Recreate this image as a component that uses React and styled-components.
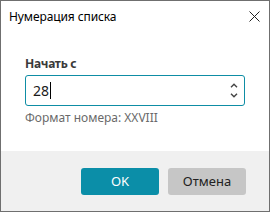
import React from "react";
import styled, { createGlobalStyle } from "styled-components";

const Global = createGlobalStyle`
  html, body {
    margin: 0;
    padding: 0;
    background: #ffffff;
  }
  * {
    box-sizing: border-box;
  }
`;

const Window = styled.div`
  width: 270px;
  height: 212px;
  border: 1px solid #6f6f6f;
  background: #ffffff;
  display: flex;
  flex-direction: column;
  font-family: "Segoe UI", "Noto Sans", sans-serif;
  color: #1a1a1a;
`;

const TitleBar = styled.div`
  height: 31px;
  display: flex;
  align-items: center;
  justify-content: space-between;
  padding: 0 4px 0 8px;
`;

const Title = styled.span`
  font-size: 12px;
  color: #000;
  letter-spacing: -0.1px;
`;

const CloseButton = styled.button`
  width: 22px;
  height: 22px;
  border: none;
  background: none;
  padding: 0;
  display: flex;
  align-items: center;
  justify-content: center;
  color: #222;
`;

const Body = styled.div`
  flex: 1;
  padding: 23px 24px 0 24px;
  display: flex;
  flex-direction: column;
`;

const Label = styled.label`
  font-size: 12px;
  font-weight: 700;
  letter-spacing: -0.3px;
  color: #3a3a3a;
  margin-bottom: 3px;
`;

const InputBox = styled.div`
  height: 31px;
  border: 1px solid #0e8da5;
  border-radius: 3px;
  display: flex;
  align-items: center;
  padding: 0 6px 0 7px;
`;

const Value = styled.span`
  flex: 1;
  font-size: 14px;
  color: #1a1a1a;
  display: flex;
  align-items: center;
`;

const Caret = styled.span`
  width: 1px;
  height: 17px;
  background: #000;
  margin-left: 1px;
`;

const Spinner = styled.div`
  display: flex;
  flex-direction: column;
  gap: 5px;
  color: #444;
`;

const Hint = styled.div`
  margin-top: 3px;
  font-size: 12px;
  color: #6a6a6a;
`;

const Footer = styled.div`
  height: 60px;
  background: #f0f0f0;
  display: flex;
  align-items: center;
  justify-content: flex-end;
  gap: 9px;
  padding: 0 23px 0 0;
`;

const Button = styled.button`
  width: 78px;
  height: 27px;
  border: none;
  border-radius: 3px;
  font-family: inherit;
  font-size: 13px;
  background: ${(p) => (p.primary ? "#0b8ea8" : "#c6c6c6")};
  color: ${(p) => (p.primary ? "#ffffff" : "#222222")};
`;

const Chevron = ({ up }) => (
  <svg width="8" height="5" viewBox="0 0 8 5">
    <path
      d={up ? "M1 4.2 L4 1.2 L7 4.2" : "M1 0.8 L4 3.8 L7 0.8"}
      fill="none"
      stroke="currentColor"
      strokeWidth="1.4"
    />
  </svg>
);

export default function App() {
  return (
    <>
      <Global />
      <Window>
        <TitleBar>
          <Title>Нумерация списка</Title>
          <CloseButton aria-label="Закрыть">
            <svg width="11" height="11" viewBox="0 0 11 11">
              <path d="M0.5 0.5 L10.5 10.5 M10.5 0.5 L0.5 10.5" stroke="currentColor" strokeWidth="1" />
            </svg>
          </CloseButton>
        </TitleBar>
        <Body>
          <Label>Начать с</Label>
          <InputBox>
            <Value>
              28
              <Caret />
            </Value>
            <Spinner>
              <Chevron up />
              <Chevron />
            </Spinner>
          </InputBox>
          <Hint>Формат номера: XXVIII</Hint>
        </Body>
        <Footer>
          <Button primary>OK</Button>
          <Button>Отмена</Button>
        </Footer>
      </Window>
    </>
  );
}
